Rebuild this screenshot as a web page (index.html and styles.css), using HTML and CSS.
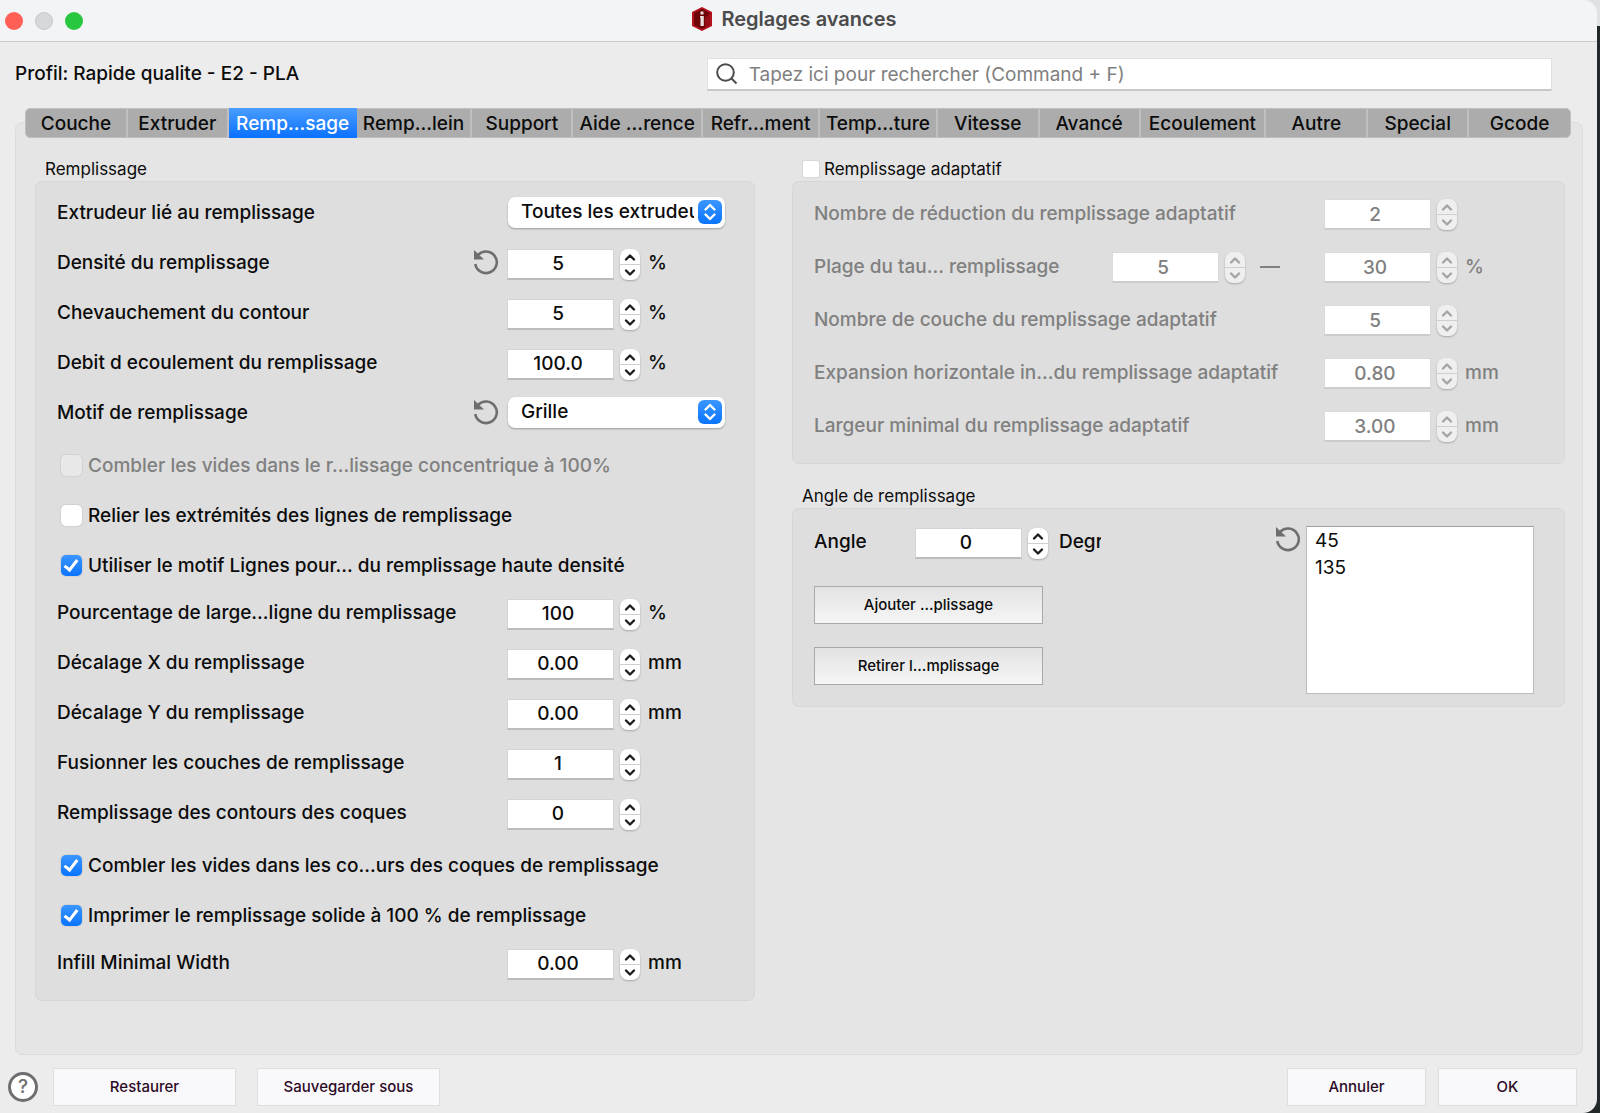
FILE: index.html
```html
<!DOCTYPE html>
<html lang="fr">
<head>
    <meta charset="UTF-8">
    <meta name="viewport" content="width=device-width, initial-scale=1.0">
    <title>Reglages avances</title>
    <link rel="stylesheet" href="styles.css">
</head>
<body>
    <svg class="symbols" aria-hidden="true">
        <symbol id="up" viewBox="0 0 20 15"><path d="M6 10.5 L10 6.5 L14 10.5"/></symbol>
        <symbol id="down" viewBox="0 0 20 15"><path d="M6 5.5 L10 9.5 L14 5.5"/></symbol>
        <symbol id="updown" viewBox="0 0 24 24"><path d="M7.5 9.5 L12 5 L16.5 9.5 M7.5 14.5 L12 19 L16.5 14.5"/></symbol>
        <symbol id="undo" viewBox="0 0 26 26">
            <path d="M5 6 A10.8 10.8 0 1 1 2.3 15" fill="none" stroke="#6e6e6e" stroke-width="2.6"/>
            <path d="M1 1 L1 10.5 L11 10.5 Z" fill="#6e6e6e"/>
        </symbol>
    </svg>

    <div class="window">
        <header class="titlebar">
            <div class="lights">
                <button class="light red" aria-label="Fermer"></button>
                <button class="light gray" aria-label="Reduire"></button>
                <button class="light green" aria-label="Agrandir"></button>
            </div>
            <h1>
                <svg width="22" height="24" viewBox="0 0 22 24">
                    <path d="M11 0 L21 5 V19 L11 24 L1 19 V5 Z" fill="#b3121c"/>
                    <path d="M11 2 L19 6 V18 L11 22 L3 18 V6 Z" fill="#6d0408"/>
                    <path d="M11 22 L19 18 V6 L14 11 V20 Z" fill="#980c14"/>
                    <path d="M9.5 4.5 H12.5 V7.5 H9.5 Z M9 9 H12.8 V19 H9.5 V10.5 H9 Z" fill="#e9dfdc"/>
                </svg>
                Reglages avances
            </h1>
        </header>

        <div class="toolbar">
            <span>Profil: Rapide qualite - E2 - PLA</span>
            <label class="search">
                <svg width="22" height="22" viewBox="0 0 22 22"><circle cx="9.5" cy="9.5" r="8.3"/><path d="M15.5 15.5 L20.5 20.5"/></svg>
                <input type="text" placeholder="Tapez ici pour rechercher (Command + F)" aria-label="Rechercher">
            </label>
        </div>

        <nav class="tabs" role="tablist">
            <button role="tab">Couche</button>
            <button role="tab">Extruder</button>
            <button role="tab" class="active" aria-selected="true">Remp...sage</button>
            <button role="tab">Remp...lein</button>
            <button role="tab">Support</button>
            <button role="tab">Aide ...rence</button>
            <button role="tab">Refr...ment</button>
            <button role="tab">Temp...ture</button>
            <button role="tab">Vitesse</button>
            <button role="tab">Avancé</button>
            <button role="tab">Ecoulement</button>
            <button role="tab">Autre</button>
            <button role="tab">Special</button>
            <button role="tab">Gcode</button>
        </nav>

        <main class="pane">
            <section class="column">
                <h2>Remplissage</h2>
                <div class="group">
                    <div class="row">
                        <label for="extruder">Extrudeur lié au remplissage</label>
                        <div class="field">
                            <div class="dropdown">
                                <select id="extruder"><option>Toutes les extrudeurs</option></select>
                                <svg width="24" height="24"><use href="#updown"/></svg>
                            </div>
                        </div>
                    </div>
                    <div class="row">
                        <label for="density">Densité du remplissage</label>
                        <button class="undo" aria-label="Retablir"><svg width="26" height="26"><use href="#undo"/></svg></button>
                        <div class="field">
                            <input type="text" id="density" value="5">
                            <span class="stepper"><button aria-label="Plus"><svg><use href="#up"/></svg></button><button aria-label="Moins"><svg><use href="#down"/></svg></button></span>
                            <span>%</span>
                        </div>
                    </div>
                    <div class="row">
                        <label for="overlap">Chevauchement du contour</label>
                        <div class="field">
                            <input type="text" id="overlap" value="5">
                            <span class="stepper"><button aria-label="Plus"><svg><use href="#up"/></svg></button><button aria-label="Moins"><svg><use href="#down"/></svg></button></span>
                            <span>%</span>
                        </div>
                    </div>
                    <div class="row">
                        <label for="flow">Debit d ecoulement du remplissage</label>
                        <div class="field">
                            <input type="text" id="flow" value="100.0">
                            <span class="stepper"><button aria-label="Plus"><svg><use href="#up"/></svg></button><button aria-label="Moins"><svg><use href="#down"/></svg></button></span>
                            <span>%</span>
                        </div>
                    </div>
                    <div class="row">
                        <label for="pattern">Motif de remplissage</label>
                        <button class="undo" aria-label="Retablir"><svg width="26" height="26"><use href="#undo"/></svg></button>
                        <div class="field">
                            <div class="dropdown">
                                <select id="pattern"><option>Grille</option></select>
                                <svg width="24" height="24"><use href="#updown"/></svg>
                            </div>
                        </div>
                    </div>
                    <div class="row check disabled">
                        <input type="checkbox" id="concentric" disabled>
                        <label for="concentric">Combler les vides dans le r...lissage concentrique à 100%</label>
                    </div>
                    <div class="row check">
                        <input type="checkbox" id="connect">
                        <label for="connect">Relier les extrémités des lignes de remplissage</label>
                    </div>
                    <div class="row check">
                        <input type="checkbox" id="lines" checked>
                        <label for="lines">Utiliser le motif Lignes pour... du remplissage haute densité</label>
                    </div>
                    <div class="row">
                        <label for="linewidth">Pourcentage de large...ligne du remplissage</label>
                        <div class="field">
                            <input type="text" id="linewidth" value="100">
                            <span class="stepper"><button aria-label="Plus"><svg><use href="#up"/></svg></button><button aria-label="Moins"><svg><use href="#down"/></svg></button></span>
                            <span>%</span>
                        </div>
                    </div>
                    <div class="row">
                        <label for="offsetx">Décalage X du remplissage</label>
                        <div class="field">
                            <input type="text" id="offsetx" value="0.00">
                            <span class="stepper"><button aria-label="Plus"><svg><use href="#up"/></svg></button><button aria-label="Moins"><svg><use href="#down"/></svg></button></span>
                            <span>mm</span>
                        </div>
                    </div>
                    <div class="row">
                        <label for="offsety">Décalage Y du remplissage</label>
                        <div class="field">
                            <input type="text" id="offsety" value="0.00">
                            <span class="stepper"><button aria-label="Plus"><svg><use href="#up"/></svg></button><button aria-label="Moins"><svg><use href="#down"/></svg></button></span>
                            <span>mm</span>
                        </div>
                    </div>
                    <div class="row">
                        <label for="combine">Fusionner les couches de remplissage</label>
                        <div class="field">
                            <input type="text" id="combine" value="1">
                            <span class="stepper"><button aria-label="Plus"><svg><use href="#up"/></svg></button><button aria-label="Moins"><svg><use href="#down"/></svg></button></span>
                        </div>
                    </div>
                    <div class="row">
                        <label for="shells">Remplissage des contours des coques</label>
                        <div class="field">
                            <input type="text" id="shells" value="0">
                            <span class="stepper"><button aria-label="Plus"><svg><use href="#up"/></svg></button><button aria-label="Moins"><svg><use href="#down"/></svg></button></span>
                        </div>
                    </div>
                    <div class="row check">
                        <input type="checkbox" id="gaps" checked>
                        <label for="gaps">Combler les vides dans les co...urs des coques de remplissage</label>
                    </div>
                    <div class="row check">
                        <input type="checkbox" id="solid" checked>
                        <label for="solid">Imprimer le remplissage solide à 100 % de remplissage</label>
                    </div>
                    <div class="row">
                        <label for="minwidth">Infill Minimal Width</label>
                        <div class="field">
                            <input type="text" id="minwidth" value="0.00">
                            <span class="stepper"><button aria-label="Plus"><svg><use href="#up"/></svg></button><button aria-label="Moins"><svg><use href="#down"/></svg></button></span>
                            <span>mm</span>
                        </div>
                    </div>
                </div>
            </section>

            <section class="column">
                <h2><input type="checkbox" id="adaptive"><label for="adaptive">Remplissage adaptatif</label></h2>
                <div class="group adaptive disabled">
                    <div class="row">
                        <label for="steps">Nombre de réduction du remplissage adaptatif</label>
                        <div class="field">
                            <input type="text" id="steps" value="2" disabled>
                            <span class="stepper"><button disabled aria-label="Plus"><svg><use href="#up"/></svg></button><button disabled aria-label="Moins"><svg><use href="#down"/></svg></button></span>
                        </div>
                    </div>
                    <div class="row">
                        <label for="rangemin">Plage du tau... remplissage</label>
                        <div class="field from">
                            <input type="text" id="rangemin" value="5" disabled>
                            <span class="stepper"><button disabled aria-label="Plus"><svg><use href="#up"/></svg></button><button disabled aria-label="Moins"><svg><use href="#down"/></svg></button></span>
                            <span class="dash"></span>
                        </div>
                        <div class="field">
                            <input type="text" value="30" aria-label="Maximum" disabled>
                            <span class="stepper"><button disabled aria-label="Plus"><svg><use href="#up"/></svg></button><button disabled aria-label="Moins"><svg><use href="#down"/></svg></button></span>
                            <span>%</span>
                        </div>
                    </div>
                    <div class="row">
                        <label for="layers">Nombre de couche du remplissage adaptatif</label>
                        <div class="field">
                            <input type="text" id="layers" value="5" disabled>
                            <span class="stepper"><button disabled aria-label="Plus"><svg><use href="#up"/></svg></button><button disabled aria-label="Moins"><svg><use href="#down"/></svg></button></span>
                        </div>
                    </div>
                    <div class="row">
                        <label for="expansion">Expansion horizontale in...du remplissage adaptatif</label>
                        <div class="field">
                            <input type="text" id="expansion" value="0.80" disabled>
                            <span class="stepper"><button disabled aria-label="Plus"><svg><use href="#up"/></svg></button><button disabled aria-label="Moins"><svg><use href="#down"/></svg></button></span>
                            <span>mm</span>
                        </div>
                    </div>
                    <div class="row">
                        <label for="adaptwidth">Largeur minimal du remplissage adaptatif</label>
                        <div class="field">
                            <input type="text" id="adaptwidth" value="3.00" disabled>
                            <span class="stepper"><button disabled aria-label="Plus"><svg><use href="#up"/></svg></button><button disabled aria-label="Moins"><svg><use href="#down"/></svg></button></span>
                            <span>mm</span>
                        </div>
                    </div>
                </div>

                <h2 class="second">Angle de remplissage</h2>
                <div class="group angle">
                    <div class="angle-form">
                        <div class="angle-row">
                            <label for="angle">Angle</label>
                            <div class="field">
                                <input type="text" id="angle" value="0">
                                <span class="stepper"><button aria-label="Plus"><svg><use href="#up"/></svg></button><button aria-label="Moins"><svg><use href="#down"/></svg></button></span>
                                <span class="degrees">Degrés</span>
                            </div>
                        </div>
                        <button class="gray-button">Ajouter ...plissage</button>
                        <button class="gray-button">Retirer l...mplissage</button>
                    </div>
                    <button class="undo" aria-label="Retablir"><svg width="26" height="26"><use href="#undo"/></svg></button>
                    <select class="angle-list" size="6" aria-label="Angles">
                        <option>45</option>
                        <option>135</option>
                    </select>
                </div>
            </section>
        </main>

        <footer class="footer">
            <button class="help" aria-label="Aide">?</button>
            <button class="wide">Restaurer</button>
            <button class="wide">Sauvegarder sous</button>
            <span class="spacer"></span>
            <button class="narrow">Annuler</button>
            <button class="narrow">OK</button>
        </footer>
    </div>
</body>
</html>
```
FILE: styles.css
```css
* {
    box-sizing: border-box;
}
body {
    margin: 0;
    padding-right: 3px;
    background: linear-gradient(#dfe2e4 26px, #23282a 26px);
    font-family: Inter, "Liberation Sans", sans-serif;
    font-size: 19px;
    font-weight: 500;
    line-height: 24px;
    color: #0c0c0c;
}
button, input, select {
    font: inherit;
    color: inherit;
    margin: 0;
    padding: 0;
    border: none;
}
button {
    background: none;
}
.symbols {
    display: none;
}
.window {
    display: flex;
    flex-direction: column;
    min-height: 100vh;
    background-color: #ececec;
    border-radius: 0 14px 14px 0;
    overflow: hidden;
}

/* title bar */
.titlebar {
    display: grid;
    grid-template-columns: 1fr auto 1fr;
    align-items: center;
    height: 42px;
    padding: 0 14px 0 5px;
    background-color: #f2f4f6;
    border-bottom: 1px solid #c9cccf;
}
.lights {
    display: flex;
    gap: 12px;
}
.light {
    width: 18px;
    height: 18px;
    border-radius: 50%;
}
.red {
    background-color: #ff5f57;
}
.gray {
    background-color: #d7d8da;
    border: 1px solid #c6c7c9;
}
.green {
    background-color: #27c840;
}
h1 {
    display: flex;
    align-items: center;
    gap: 8px;
    margin: 0;
    padding-bottom: 4px;
    font-size: 20px;
    font-weight: 600;
    color: #4b4b4c;
}

/* profile and search */
.toolbar {
    display: flex;
    align-items: center;
    justify-content: space-between;
    height: 66px;
    padding: 0 45px 2px 15px;
}
.search {
    display: flex;
    align-items: center;
    width: 55%;
    height: 33px;
    padding-left: 8px;
    background-color: #fff;
    border: 1px solid #e0e0e0;
    border-bottom: 2px solid #c8c8c8;
}
.search svg {
    fill: none;
    stroke: #4c4c4c;
    stroke-width: 2;
}
.search input {
    flex: 1;
    margin-left: 11px;
    padding-top: 2px;
    background: none;
    outline: none;
}
.search input::placeholder {
    color: #808080;
    font-weight: 400;
}

/* tabs */
.tabs {
    position: relative;
    z-index: 1;
    display: grid;
    grid-template-columns: 102fr 101fr 128fr 116fr 101fr 130fr 117fr 118fr 102fr 101fr 126fr 102fr 101fr 101fr;
    height: 30px;
    margin: 0 26px 0 25px;
    background-color: #acacac;
    border: 1px solid #c0c0c0;
    border-radius: 5px;
}
.tabs button {
    padding-top: 2px;
    white-space: nowrap;
    border-right: 2px solid #c0c0c0;
}
.tabs button:last-child {
    border-right: none;
}
.tabs .active {
    margin: -1px 0;
    color: #fff;
    background: linear-gradient(#4a9dff, #0a70ff);
    border-right: none;
}

/* content */
.pane {
    flex: 1;
    display: grid;
    grid-template-columns: 720fr 773fr;
    gap: 37px;
    margin: -16px 14px 0 15px;
    padding: 32px 17px 53px 19px;
    background-color: #e5e5e5;
    border: 1px solid #dcdcdc;
    border-radius: 7px;
}
h2 {
    display: flex;
    align-items: center;
    height: 26px;
    margin: 0;
    padding: 2px 0 0 10px;
    font-size: 17px;
    font-weight: 400;
}
h2 input[type="checkbox"] {
    width: 16px;
    height: 16px;
    margin: 0 5px 0 1px;
}
.second {
    margin-top: 18px;
}
.group {
    padding: 6px 0 12px 21px;
    background-color: #dedede;
    border: 1px solid #d6d6d6;
    border-radius: 7px;
}
.row {
    display: flex;
    align-items: center;
    height: 50px;
    white-space: nowrap;
}
.row > label {
    flex: 1;
}
.adaptive {
    padding: 5px 0 11px 21px;
}
.adaptive .row {
    height: 53px;
}
.disabled {
    color: #808080;
}
.field {
    display: flex;
    align-items: center;
    width: 247px;
}
.adaptive .field {
    width: 240px;
}
.adaptive .from {
    width: 212px;
}
.field input {
    width: 107px;
    height: 31px;
    margin: 2px 6px 0 0;
    padding-right: 5px;
    text-align: center;
    background-color: #fff;
    border: 1px solid #d4d4d4;
    border-bottom: 2px solid #bcbcbc;
}
.disabled .field input {
    border-color: #dadada;
    border-bottom-color: #cccccc;
}
.stepper {
    display: flex;
    flex-direction: column;
    width: 20px;
    height: 31px;
    margin: 2px 8px 0 0;
    background-color: #fff;
    border-radius: 8px;
    box-shadow: 0 1px 2px rgba(0, 0, 0, 0.25);
}
.stepper button {
    height: 15px;
}
.stepper button:first-child {
    height: 16px;
    border-bottom: 1px solid #cfcfcf;
}
.stepper svg {
    display: block;
    width: 20px;
    height: 15px;
    fill: none;
    stroke: #1c1c1c;
    stroke-width: 2.4;
    stroke-linecap: round;
    stroke-linejoin: round;
}
.disabled .stepper {
    background-color: #efefef;
}
.disabled .stepper svg {
    stroke: #a4a4a4;
}
.dash {
    width: 20px;
    height: 2px;
    margin-left: 7px;
    background-color: #808080;
}
.dropdown {
    position: relative;
    width: 217px;
    height: 31px;
    margin: 0 0 2px 1px;
}
.dropdown select {
    width: 100%;
    height: 100%;
    padding: 0 31px 0 13px;
    appearance: none;
    background-color: #fff;
    border-radius: 7px;
    box-shadow: 0 1px 2px rgba(0, 0, 0, 0.3);
}
.dropdown svg {
    position: absolute;
    top: 3px;
    right: 3px;
    background: linear-gradient(#3a96ff, #0a74ff);
    border-radius: 6px;
    fill: none;
    stroke: #fff;
    stroke-width: 2.4;
    stroke-linecap: round;
    stroke-linejoin: round;
    pointer-events: none;
}
.undo {
    width: 26px;
    height: 26px;
    margin: 0 8px 2px 0;
}
.undo svg {
    display: block;
}

/* check boxes */
.check {
    padding: 6px 0 0 4px;
}
input[type="checkbox"] {
    position: relative;
    width: 21px;
    height: 21px;
    margin: 0 6px 2px 0;
    appearance: none;
    background-color: #fff;
    border-radius: 5px;
    box-shadow: 0 0 1px 1px rgba(0, 0, 0, 0.06);
}
input[type="checkbox"]:disabled {
    background-color: #e8e8e8;
}
h2 input[type="checkbox"] {
    border-radius: 2px;
}
input[type="checkbox"]:checked {
    background: linear-gradient(#3a96ff, #0a74ff);
}
input[type="checkbox"]:checked::after {
    content: "";
    position: absolute;
    left: 6px;
    top: 2px;
    width: 5px;
    height: 11px;
    border: solid #fff;
    border-width: 0 3px 3px 0;
    transform: rotate(38deg);
}

/* angles */
.angle {
    display: flex;
    align-items: flex-start;
    padding: 17px 30px 12px 21px;
}
.angle-form {
    flex: 1;
}
.angle-row {
    display: flex;
    align-items: center;
    height: 32px;
    margin-bottom: 28px;
}
.angle-row label {
    width: 101px;
}
.degrees {
    width: 42px;
    margin-left: 3px;
    overflow: hidden;
}
.gray-button {
    display: block;
    width: 229px;
    height: 38px;
    margin-bottom: 23px;
    font-size: 15px;
    background: linear-gradient(#e2e2e2, #f6f6f6);
    border: 1px solid #a9a9a9;
}
.gray-button:last-child {
    margin-bottom: 0;
}
.angle .undo {
    margin-right: 5px;
}
.angle-list {
    width: 228px;
    height: 168px;
    padding: 2px 8px;
    background-color: #fff;
    border: 1px solid #bdbdbd;
    border-top-color: #a0a0a0;
    border-radius: 0;
    overflow: hidden;
}
.angle-list option {
    min-height: 27px;
    padding: 0;
    line-height: 27px;
}

/* bottom buttons */
.footer {
    display: flex;
    align-items: center;
    height: 58px;
    padding: 5px 20px 0 8px;
    font-size: 15px;
    color: #2d0a26;
}
.footer .wide, .footer .narrow {
    width: 183px;
    height: 38px;
    margin-right: 21px;
    background-color: #f9f9fb;
    border: 1px solid #dddde2;
}
.footer .narrow {
    width: 139px;
    margin: 0 0 0 12px;
}
.footer .help {
    width: 30px;
    height: 30px;
    margin-right: 15px;
    font-size: 19px;
    line-height: 24px;
    color: #6e6e6e;
    background-color: #fff;
    border: 3px solid #6e6e6e;
    border-radius: 50%;
}
.spacer {
    flex: 1;
}
```
